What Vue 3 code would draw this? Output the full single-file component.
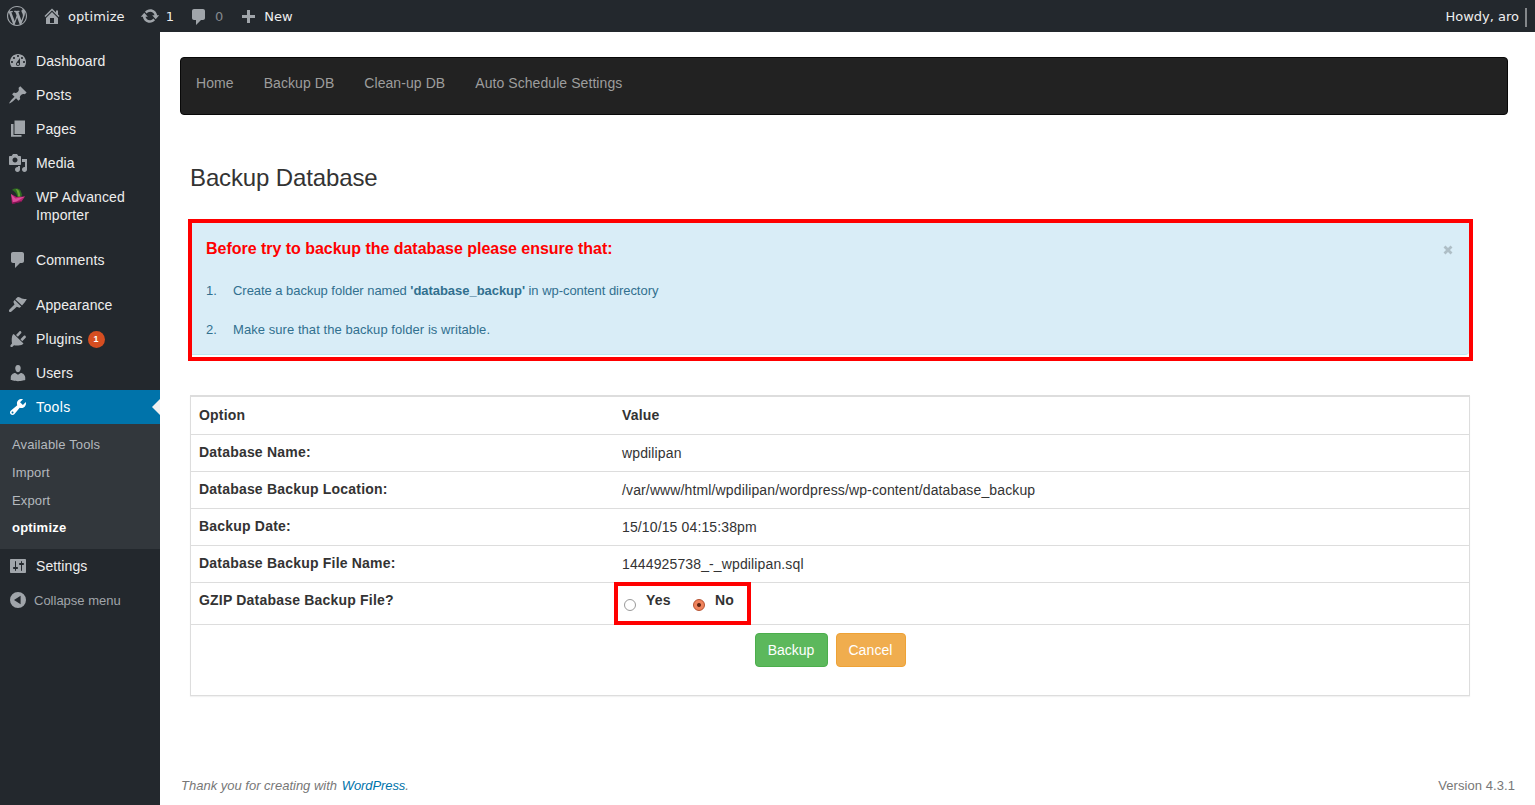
<script setup>
import { ref } from 'vue'

const icons = {
    wordpress: 'M20 10c0-5.51-4.49-10-10-10C4.48 0 0 4.49 0 10c0 5.52 4.48 10 10 10 5.51 0 10-4.48 10-10zM7.78 15.37L4.37 6.22c.55-.02 1.17-.08 1.17-.08.5-.06.44-1.13-.06-1.11 0 0-1.45.11-2.37.11-.18 0-.37 0-.58-.01C4.12 2.69 6.87 1.11 10 1.11c2.33 0 4.45.87 6.05 2.34-.68-.11-1.65.39-1.65 1.58 0 .74.45 1.36.9 2.1.35.61.55 1.36.55 2.46 0 1.49-1.4 5-1.4 5l-3.03-8.37c.54-.02.82-.17.82-.17.5-.05.44-1.25-.06-1.22 0 0-1.44.12-2.38.12-.87 0-2.33-.12-2.33-.12-.5-.03-.56 1.2-.06 1.22l.92.08 1.26 3.41zM17.41 10c.24-.64.74-1.87.43-4.25.7 1.29 1.05 2.71 1.05 4.25 0 3.29-1.73 6.24-4.4 7.78.97-2.59 1.94-5.2 2.92-7.78zM6.1 18.09C3.12 16.65 1.11 13.53 1.11 10c0-1.3.23-2.48.72-3.59C3.25 10.3 4.67 14.2 6.1 18.09zm4.03-6.63l2.58 6.98c-.86.29-1.76.45-2.71.45-.79 0-1.57-.11-2.29-.33.81-2.38 1.62-4.74 2.42-7.1z',
    home: 'M16 8.5l1.53 1.53-1.06 1.06L10 4.6l-6.47 6.49-1.06-1.06L10 2.5l4 4v-2h2v4zm-6-2.46l6 5.99V18H4v-5.97zM12 17v-5H8v5h4z',
    update: 'M10.2 3.28c3.53 0 6.43 2.61 6.92 6h2.08l-3.5 4-3.5-4h2.32c-.45-1.97-2.21-3.45-4.32-3.45-1.45 0-2.73.71-3.54 1.78L4.95 5.66C6.23 4.2 8.11 3.28 10.2 3.28zm-.4 13.44c-3.52 0-6.43-2.61-6.92-6H.8l3.5-4c1.17 1.33 2.33 2.67 3.5 4H5.48c.45 1.97 2.21 3.45 4.32 3.45 1.45 0 2.73-.71 3.54-1.78l1.71 1.95c-1.28 1.46-3.15 2.38-5.25 2.38z',
    plus: 'M17 7v3h-5v5H9v-5H4V7h5V2h3v5h5z',
    comments: 'M5 2h9c1.1 0 2 .9 2 2v7c0 1.1-.9 2-2 2h-2l-5 5v-5H5c-1.1 0-2-.9-2-2V4c0-1.1.9-2 2-2z',
    dashboard: 'M3.76 16h12.48c1.1-1.37 1.76-3.11 1.76-5 0-4.42-3.58-8-8-8s-8 3.58-8 8c0 1.89.66 3.63 1.76 5zM10 4c.55 0 1 .45 1 1s-.45 1-1 1-1-.45-1-1 .45-1 1-1zM6 6c.55 0 1 .45 1 1s-.45 1-1 1-1-.45-1-1 .45-1 1-1zm8 0c.55 0 1 .45 1 1s-.45 1-1 1-1-.45-1-1 .45-1 1-1zm-5.37 5.55L12 7v6c0 1.1-.9 2-2 2s-2-.9-2-2c0-.57.24-1.08.63-1.45zM4 10c.55 0 1 .45 1 1s-.45 1-1 1-1-.45-1-1 .45-1 1-1zm12 0c.55 0 1 .45 1 1s-.45 1-1 1-1-.45-1-1 .45-1 1-1zm-5 3c0-.55-.45-1-1-1s-1 .45-1 1 .45 1 1 1 1-.45 1-1z',
    posts: 'M10.44 3.02l1.82-1.82 6.36 6.35-1.83 1.82c-1.05-.68-2.48-.57-3.41.36l-.75.75c-.92.93-1.04 2.35-.35 3.41l-1.83 1.82-2.41-2.41-2.8 2.79c-.42.42-3.38 2.71-3.8 2.29s1.86-3.39 2.28-3.81l2.79-2.79L4.1 9.36l1.83-1.82c1.05.69 2.48.57 3.4-.36l.75-.75c.93-.92 1.05-2.35.36-3.41z',
    pages: 'M6.500 15V1.500h10.500V15H6.500zM5.500 16h8v1.800H3V5h2.500z',
    media: 'M13 11V4c0-.55-.45-1-1-1h-1.67L9 1H5L3.67 3H2c-.55 0-1 .45-1 1v7c0 .55.45 1 1 1h10c.55 0 1-.45 1-1zM7 4.5c1.38 0 2.5 1.12 2.5 2.5S8.38 9.5 7 9.5 4.5 8.38 4.5 7 5.62 4.5 7 4.5zM14 6h5v10.5c0 1.38-1.12 2.5-2.5 2.5S14 17.88 14 16.5s1.12-2.5 2.5-2.5c.17 0 .34.02.5.05V9h-3V6zm-4 8.05V13h2v3.5c0 1.38-1.12 2.5-2.5 2.5S7 17.88 7 16.5 8.12 14 9.5 14c.17 0 .34.02.5.05z',
    appearance: 'M9.500 2.200c1.500-.5 2.800.6 4.300 1.300 1.700.5 3.200.4 5 .5-1.300 2.300-3 4.700-4.800 6.600L7.300 4.200zM6.600 4.900l6.600 6.500-1.300 1.200c-1.100.3-2-.8-3.100-.9L3.500 16.500c-.8.7-1.700.8-2.200.3s-.5-1.400.2-2.200l5-5.200c-.2-1.100-1.300-1.900-1-3z',
    plugins: 'M13.100 4.300L9.900 7.800 8 5.900l3.300-3.500c.5-.5 1.200-.4 1.700.1.500.6.600 1.300.1 1.800zM4.700 5.800l1-.9 9.800 9.700-1.100.9c-1.300.8-5.800 1.300-8.400.8L4.500 17.700c-.5.5-1.300.5-1.800 0s-.5-1.300 0-1.800l1.300-1.400c-.5-2.500-.4-6.900.7-8.700zM12.400 10.300l3.400-3.500c.5-.5 1.200-.4 1.700.1s.6 1.300.1 1.800l-3.300 3.500z',
    users: 'M10 9.25c-2.27 0-2.73-3.44-2.73-3.44C7 4.02 7.82 2 9.97 2c2.16 0 2.98 2.02 2.71 3.81 0 0-.41 3.44-2.68 3.44zm0 2.57L12.72 10c2.39 0 4.52 2.33 4.52 4.53v2.49s-3.65 1.13-7.24 1.13c-3.65 0-7.24-1.13-7.24-1.13v-2.49c0-2.25 1.94-4.48 4.47-4.48z',
    tools: 'M16.68 9.77c-1.34 1.34-3.3 1.67-4.95.99l-5.41 6.52c-.99.99-2.59.99-3.58 0s-.99-2.59 0-3.57l6.52-5.42c-.68-1.65-.35-3.61.99-4.95 1.28-1.28 3.12-1.62 4.72-1.06l-2.89 2.89 2.82 2.82 2.86-2.87c.53 1.58.18 3.39-1.08 4.65zM3.81 16.21c.4.39 1.04.39 1.43 0 .4-.4.4-1.04 0-1.43-.39-.4-1.03-.4-1.43 0-.39.39-.39 1.03 0 1.43z',
    settings: 'M18 16V4c0-.55-.45-1-1-1H3c-.55 0-1 .45-1 1v12c0 .55.45 1 1 1h14c.55 0 1-.45 1-1zM8 11h1c.55 0 1 .45 1 1s-.45 1-1 1H8v1.5c0 .28-.22.5-.5.5s-.5-.22-.5-.5V13H6c-.55 0-1-.45-1-1s.45-1 1-1h1V5.500c0-.28.22-.5.5-.5s.5.22.5.5V11zm5-2h-1c-.55 0-1-.45-1-1s.45-1 1-1h1V5.500c0-.28.22-.5.5-.5s.5.22.5.5V7h1c.55 0 1 .45 1 1s-.45 1-1 1h-1v5.500c0 .28-.22.5-.5.5s-.5-.22-.5-.5V9z',
    collapse: 'M10 2a8 8 0 1 0 0 16 8 8 0 0 0 0-16zM12.6 5.8v8.4L6 10z'
}

const menu = [
    { icon: 'dashboard', label: 'Dashboard' },
    { icon: 'posts', label: 'Posts' },
    { icon: 'pages', label: 'Pages' },
    { icon: 'media', label: 'Media' },
    { icon: 'importer', label: 'WP Advanced Importer' },
    { icon: 'comments', label: 'Comments', gap: true },
    { icon: 'appearance', label: 'Appearance', gap: true },
    { icon: 'plugins', label: 'Plugins', count: 1 },
    { icon: 'users', label: 'Users' },
    { icon: 'tools', label: 'Tools', current: true },
    { icon: 'settings', label: 'Settings' }
]

const submenu = ['Available Tools', 'Import', 'Export', 'optimize']
const tabs = ['Home', 'Backup DB', 'Clean-up DB', 'Auto Schedule Settings']

const rows = [
    ['Database Name:', 'wpdilipan'],
    ['Database Backup Location:', '/var/www/html/wpdilipan/wordpress/wp-content/database_backup'],
    ['Backup Date:', '15/10/15 04:15:38pm'],
    ['Database Backup File Name:', '1444925738_-_wpdilipan.sql']
]

const gzip = ref('no')
</script>

<template>
    <div class="page">
        <header class="adminbar">
            <div class="bar-item logo"><svg viewBox="0 0 20 20"><path :d="icons.wordpress"/></svg></div>
            <div class="bar-item site"><svg viewBox="0 0 20 20"><path :d="icons.home"/></svg><span>optimize</span></div>
            <div class="bar-item updates"><svg viewBox="0 0 20 20"><path :d="icons.update"/></svg><span>1</span></div>
            <div class="bar-item replies"><svg viewBox="0 0 20 20"><path :d="icons.comments"/></svg><span class="dim">0</span></div>
            <div class="bar-item new"><svg viewBox="0 0 20 20"><path :d="icons.plus"/></svg><span>New</span></div>
            <div class="account"><span>Howdy, aro</span><i class="avatar"/></div>
        </header>

        <div class="body">
            <nav class="sidebar">
                <template v-for="item in menu" :key="item.label">
                    <a class="menu-item" :class="{ current: item.current, gap: item.gap }">
                        <svg v-if="item.icon === 'importer'" class="beet" viewBox="0 0 16 16">
                            <path fill="#2f6b22" d="M2 2C4 0 9 0 10.500 2.500l1.500 4-1 3H7.500C7 7 6 4 2 2z"/>
                            <path fill="#6aa534" d="M5.500 1C9 1 10 4 10.200 8.500H8C8 5.500 7 3 5.500 1z"/>
                            <path fill="#b3246f" d="M1 6l5.500 3L15 8.500l-3.500 5L2 16z"/>
                            <path fill="#dd4d9b" d="M1 6l4.500 4.500L15 8.500l-8.500 5-3.500.5z"/>
                            <path fill="#7a1450" d="M2 14.800l10-2-.8 1.200L2 16z"/>
                        </svg>
                        <svg v-else viewBox="0 0 20 20"><path :d="icons[item.icon]"/></svg>
                        <span class="menu-label">{{ item.label }}</span>
                        <span v-if="item.count" class="count">{{ item.count }}</span>
                    </a>
                    <div v-if="item.current" class="submenu">
                        <a v-for="sub in submenu" :key="sub" :class="{ active: sub === 'optimize' }">{{ sub }}</a>
                    </div>
                </template>
                <a class="menu-item collapse">
                    <svg viewBox="0 0 20 20"><path fill-rule="evenodd" :d="icons.collapse"/></svg>
                    <span class="menu-label">Collapse menu</span>
                </a>
            </nav>

            <main class="content">
                <nav class="navbar">
                    <a v-for="tab in tabs" :key="tab">{{ tab }}</a>
                </nav>

                <h3 class="title">Backup Database</h3>

                <section class="marked">
                    <div class="alert">
                        <div class="alert-head">
                            <strong>Before try to backup the database please ensure that:</strong>
                            <svg class="close" viewBox="0 0 10 10"><path d="M1.500 1.500l7 7M8.500 1.500l-7 7"/></svg>
                        </div>
                        <p class="tight"><span class="num">1.</span><span>Create a backup folder named <b>'database_backup'</b> in wp-content directory</span></p>
                        <p><span class="num">2.</span><span>Make sure that the backup folder is writable.</span></p>
                    </div>
                </section>

                <section class="table">
                    <div class="row head">
                        <b>Option</b>
                        <b>Value</b>
                    </div>
                    <div v-for="row in rows" :key="row[0]" class="row">
                        <b>{{ row[0] }}</b>
                        <span class="value">{{ row[1] }}</span>
                    </div>
                    <div class="row gzip">
                        <b>GZIP Database Backup File?</b>
                        <div class="choices">
                            <label><input v-model="gzip" type="radio" value="yes"><b>Yes</b></label>
                            <label><input v-model="gzip" type="radio" value="no"><b>No</b></label>
                        </div>
                    </div>
                    <div class="actions">
                        <button class="btn success">Backup</button>
                        <button class="btn warning">Cancel</button>
                    </div>
                </section>

                <footer class="footer">
                    <em>Thank you for creating with <a>WordPress</a>.</em>
                    <span class="version">Version 4.3.1</span>
                </footer>
            </main>
        </div>
    </div>
</template>

<style>
body {
    background: #fff;
    overflow: hidden;
}
</style>

<style scoped>
* {
    box-sizing: border-box;
}

.page {
    display: flex;
    flex-direction: column;
    height: 805px;
    font-family: "Liberation Sans", Arial, sans-serif;
    font-size: 14px;
    color: #333;
}

.adminbar {
    display: flex;
    height: 32px;
    flex: none;
    background: #23282d;
    color: #eee;
    font: 13px/32px "DejaVu Sans", sans-serif;
}

.adminbar svg {
    width: 20px;
    height: 20px;
    fill: #a0a5aa;
}

.adminbar span {
    padding-top: 2px;
}

.bar-item {
    display: flex;
    align-items: center;
    gap: 6px;
    height: 32px;
}

.logo {
    padding-left: 7px;
}

.site {
    padding-left: 15px;
    letter-spacing: 0.08px;
}

.updates {
    padding-left: 15px;
}

.replies {
    padding-left: 15px;

    svg {
        margin-top: 2px;
    }
}

.new {
    padding-left: 15px;

    svg {
        margin-top: 3px;
    }
}

.dim {
    color: #84898d;
}

.account {
    display: flex;
    align-items: center;
    gap: 6px;
    margin-left: auto;
    padding-right: 8px;
}

.avatar {
    width: 2px;
    height: 19px;
    margin-top: 2px;
    background: #84878a;
}

.body {
    display: flex;
    flex: 1;
}

.sidebar {
    width: 160px;
    flex: none;
    padding-top: 12px;
    background: #23282d;
}

.menu-item {
    display: flex;
    position: relative;
    padding: 8px 0 8px 8px;
    color: #eee;
    line-height: 18px;
}

.menu-item svg {
    width: 20px;
    height: 20px;
    margin: -1px 0;
    flex: none;
    fill: #a0a5aa;
}

.menu-item .beet {
    width: 16px;
    height: 16px;
    margin: 0 2px;
}

.menu-label {
    margin-left: 8px;
    max-width: 104px;
    letter-spacing: 0.1px;
}

.gap {
    margin-top: 11px;
}

.count {
    width: 17px;
    height: 17px;
    margin: 1px 0 0 5px;
    border-radius: 50%;
    background: #d54e21;
    color: #fff;
    font: bold 9px/17px "Liberation Sans", sans-serif;
    text-align: center;
}

.current {
    background: #0073aa;
    color: #fff;

    svg {
        fill: #fff;
    }

    .menu-label {
        letter-spacing: 0.4px;
    }

    &:after {
        content: '';
        position: absolute;
        right: 0;
        top: 9px;
        border: 8px solid transparent;
        border-left: 0;
        border-right-color: #f1f1f1;
    }
}

.submenu {
    display: flex;
    flex-direction: column;
    height: 125px;
    padding: 7px 0 0 12px;
    background: #32373c;
    color: #b4b9be;
    font-size: 13px;
    line-height: 28px;
    letter-spacing: 0.13px;
}

.submenu .active {
    color: #fff;
    font-weight: bold;
    line-height: 26px;
    letter-spacing: 0.2px;
}

.collapse {
    color: #a0a5aa;
    font-size: 13px;

    .menu-label {
        margin-left: 6px;
        padding-top: 1px;
        letter-spacing: 0;
    }
}

.content {
    display: flex;
    flex-direction: column;
    flex: 1;
    padding: 25px 20px 0;
}

.navbar {
    display: flex;
    height: 58px;
    width: 1328px;
    border: 1px solid #080808;
    border-radius: 4px;
    background: #222;
    color: #9d9d9d;
    line-height: 20px;
    letter-spacing: 0.07px;
}

.navbar a {
    padding: 15px;
}

.title {
    margin: 50px 0 28px 10px;
    font-size: 24px;
    font-weight: normal;
    line-height: 26px;
    letter-spacing: -0.13px;
}

.marked {
    width: 1285px;
    height: 142px;
    margin-left: 8px;
    border: 4px solid #f00;
}

.alert {
    height: 132px;
    padding: 16px 14px 0;
    border-bottom: 1px solid #bce8f1;
    border-radius: 0 0 4px 0;
    background: #d9edf7;
    color: #31708f;
    font-size: 13px;
}

.alert-head {
    display: flex;
    justify-content: space-between;
    margin-bottom: 23px;
    color: #f00;
    font-size: 16px;
    line-height: 20px;
    letter-spacing: -0.03px;
}

.close {
    width: 10px;
    height: 10px;
    margin: 6px 2px 0 0;
    stroke: #aebec6;
    stroke-width: 2.8;
}

.alert p {
    display: flex;
    margin: 0 0 21px;
    line-height: 18px;
    letter-spacing: 0.06px;
}

.alert .tight {
    letter-spacing: -0.04px;
}

.num {
    width: 27px;
}

.table {
    width: 1280px;
    height: 301px;
    margin: 34px 0 0 10px;
    border: 1px solid #ddd;
    box-shadow: 0 1px 1px rgba(0, 0, 0, 0.05);
}

.row {
    display: flex;
    height: 37px;
    border-bottom: 1px solid #ddd;
    line-height: 20px;
    padding: 7px 8px 0;
    letter-spacing: 0.2px;
}

.row > b:first-child {
    width: 423px;
}

.head {
    height: 39px;
    border-top: 1px solid #ddd;
    padding-top: 8px;
}

.value {
    padding-top: 1px;
    letter-spacing: 0.13px;
}

.gzip {
    position: relative;
    height: 42px;
}

/* highlight frame drawn over the cell borders */
.choices {
    display: flex;
    position: absolute;
    left: 423px;
    top: -1px;
    width: 137px;
    height: 43px;
    padding-left: 6px;
    border: 4px solid #f00;
}

.choices label {
    display: flex;
    flex: none;
    width: 69px;
    padding-top: 4px;
}

.choices label:last-child {
    width: 50px;
}

.choices input {
    appearance: none;
    width: 12px;
    height: 12px;
    flex: none;
    margin: 9px 10px 0 0;
    border: 1px solid #999;
    border-radius: 50%;
    background: #fff;

    &:checked {
        border-color: #b5502e;
        background: radial-gradient(circle, #5e2412 0 1.5px, #f0835c 2.4px);
    }
}

.actions {
    display: flex;
    justify-content: center;
    gap: 8px;
    padding-top: 8px;
}

.btn {
    width: 73px;
    height: 34px;
    padding: 0;
    border: 1px solid #4cae4c;
    border-radius: 4px;
    background: #5cb85c;
    color: #fff;
    font: 14px/20px "Liberation Sans", Arial, sans-serif;
}

.warning {
    width: 70px;
    border-color: #eea236;
    background: #f0ad4e;
    letter-spacing: 0.1px;
}

.footer {
    display: flex;
    justify-content: space-between;
    margin-top: auto;
    padding: 0 0 10px 1px;
    color: #777;
    font-size: 13px;
    line-height: 19px;
}

.footer a {
    margin-left: 1px;
    color: #0073aa;
    letter-spacing: -0.08px;
}

.version {
    letter-spacing: 0.07px;
}
</style>
